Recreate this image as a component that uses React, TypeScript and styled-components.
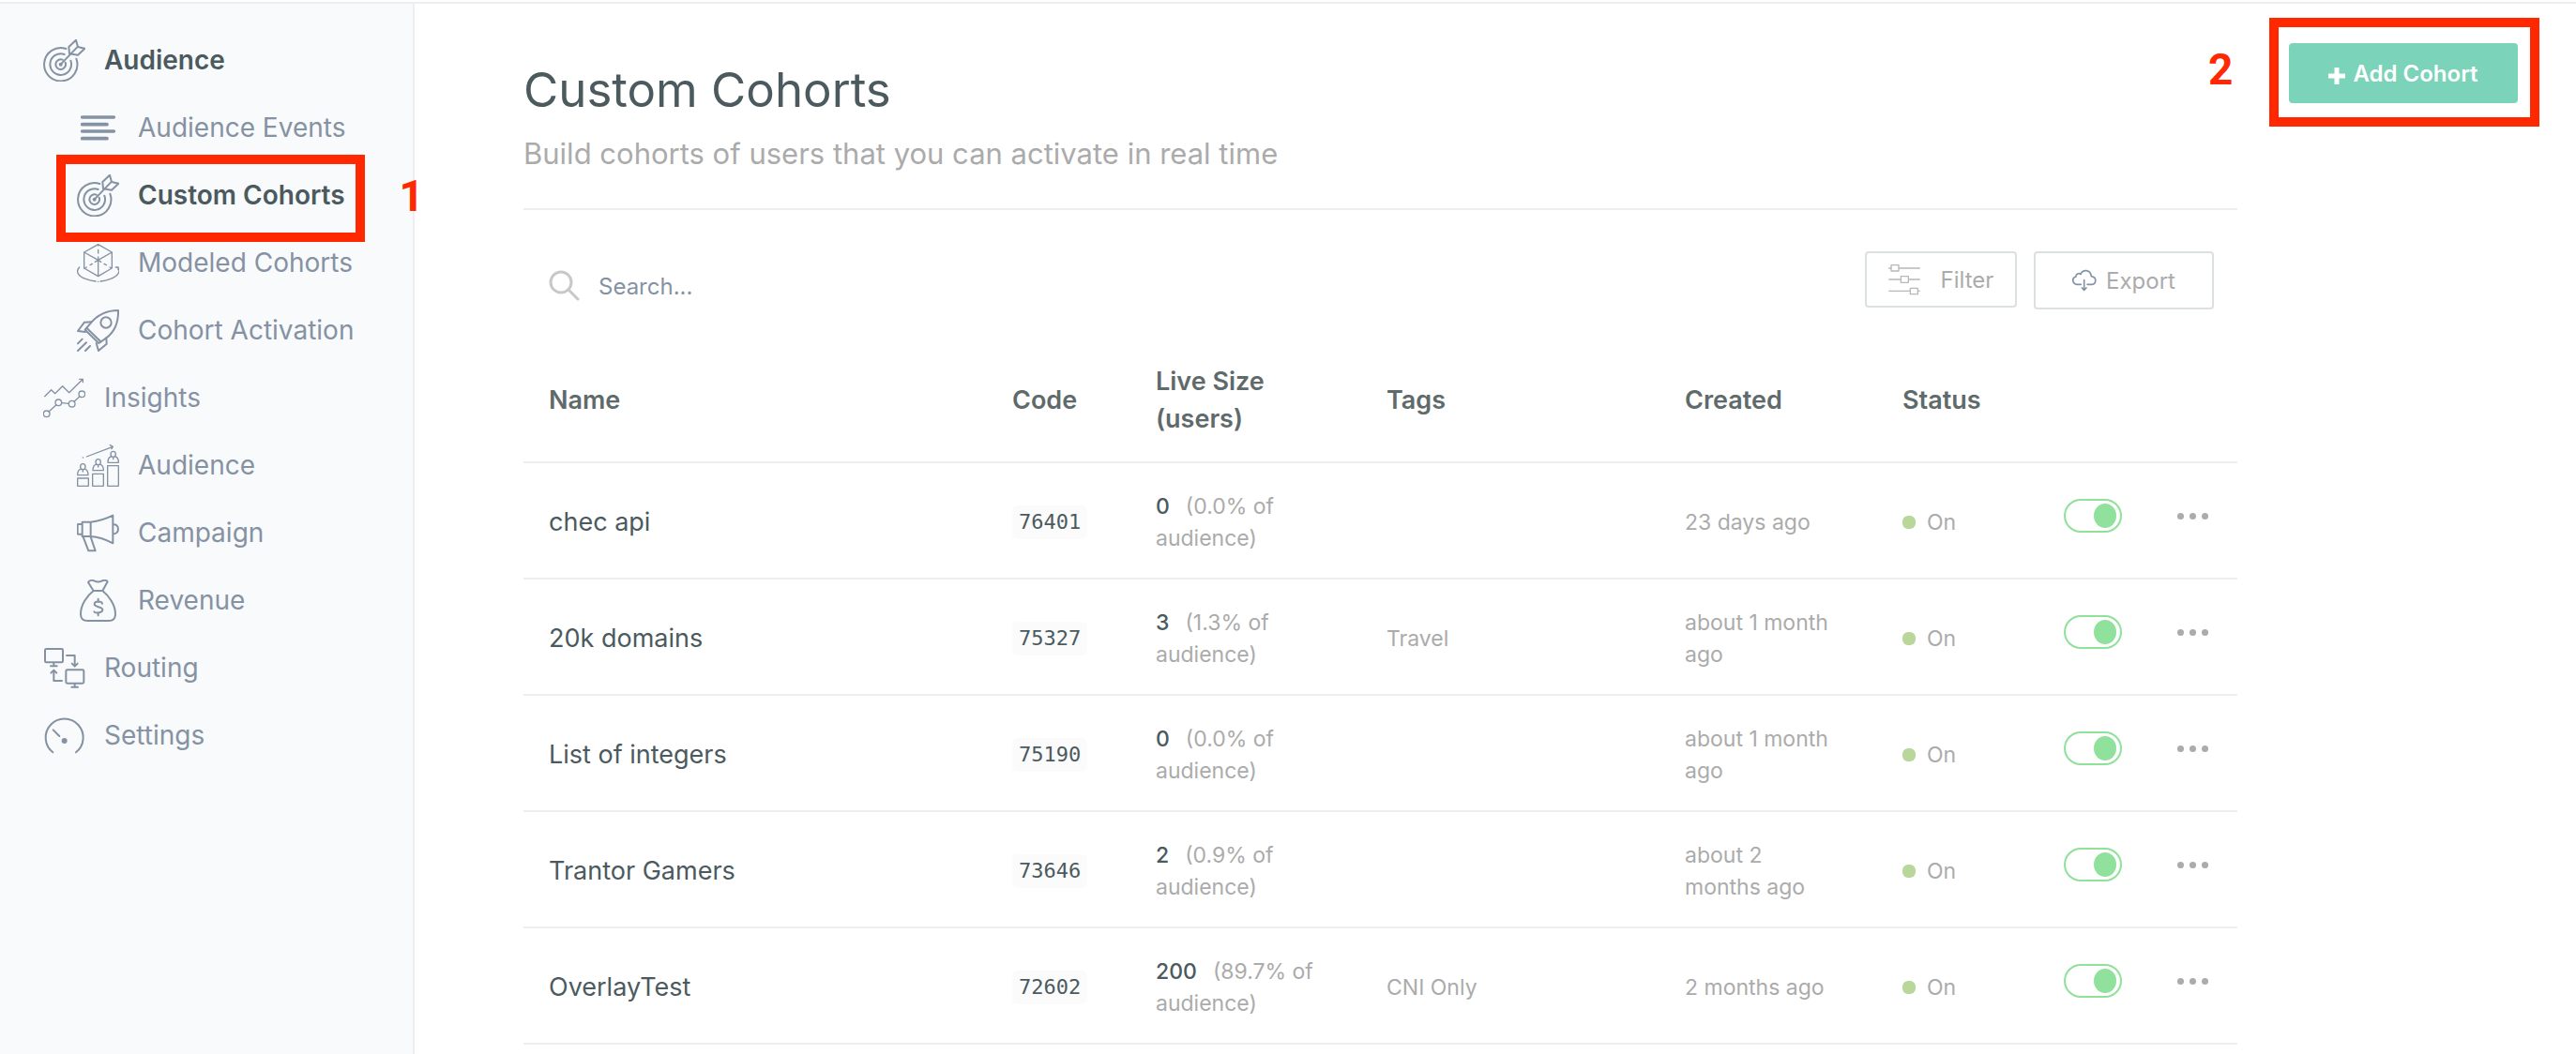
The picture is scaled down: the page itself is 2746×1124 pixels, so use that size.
import React, { useState } from "react";
import styled, { createGlobalStyle } from "styled-components";

const color = {
  ink: "#4b5a5e",
  heading: "#5f6a6b",
  nav: "#8592a3",
  muted: "#ababab",
  line: "#eeeeee",
  panel: "#f9fafc",
  red: "#ff2800",
  mint: "#7bd3b9",
  green: "#8fe19b",
  olive: "#b9d69b",
};

const GlobalStyle = createGlobalStyle`
  *, *::before, *::after { box-sizing: border-box; }
  body {
    margin: 0;
    background: #fff;
    color: ${color.ink};
    font-family: Inter, "Liberation Sans", sans-serif;
    font-size: 23px;
  }
  button, input { font: inherit; }
`;

const Page = styled.div`
  display: flex;
  flex-direction: column;
  min-height: 100vh;
  padding-top: 2px;
`;

const Shell = styled.div`
  display: flex;
  flex: 1;
  border-top: 2px solid ${color.line};
`;

const Sidebar = styled.nav`
  flex: 0 0 442px;
  padding: 24px 0;
  background: ${color.panel};
  border-right: 2px solid ${color.line};
`;

const NavList = styled.ul`
  margin: 0;
  padding: 0;
  list-style: none;
`;

const NavItem = styled.li<{ $nested?: boolean }>`
  position: relative;
  padding-left: ${(p) => (p.$nested ? 82 : 46)}px;
`;

const NavLink = styled.a<{ $active?: boolean }>`
  display: flex;
  align-items: center;
  gap: 20px;
  padding: 14px 0 13px;
  line-height: 45px;
  font-size: 28px;
  font-weight: ${(p) => (p.$active ? 600 : 400)};
  color: ${(p) => (p.$active ? color.ink : color.nav)};
  text-decoration: none;
  white-space: nowrap;
`;

const NavSvg = styled.svg`
  flex: none;
  width: 45px;
  height: 45px;
  fill: none;
  stroke: ${color.nav};
  stroke-width: 6;
  stroke-linecap: round;
  stroke-linejoin: round;
`;

const NavCallout = styled.span`
  position: absolute;
  left: 60px;
  right: 51px;
  top: -7px;
  height: 93px;
  border: 10px solid ${color.red};
  pointer-events: none;
`;

const Step = styled.span`
  position: absolute;
  color: ${color.red};
  font-family: Roboto, "Liberation Sans", sans-serif;
  font-size: 46px;
  line-height: 48px;
  font-weight: 700;
`;

const NavStep = styled(Step)`
  top: 13px;
  right: -12px;
`;

const Main = styled.main`
  display: flex;
  flex: 1;
  align-items: flex-start;
  min-width: 0;
  padding: 42px 62px 0 116px;
  gap: 55px;
`;

const Content = styled.section`
  flex: 1;
  min-width: 0;
`;

const Header = styled.header`
  padding: 18px 0 38px;
  border-bottom: 2px solid ${color.line};
`;

const Title = styled.h1`
  margin: 0 0 16px;
  font-size: 51px;
  line-height: 64px;
  font-weight: 400;
`;

const Subtitle = styled.p`
  margin: 0;
  font-size: 31px;
  line-height: 40px;
  color: ${color.muted};
`;

const Toolbar = styled.div`
  display: flex;
  align-items: flex-start;
  gap: 18px;
  padding: 44px 25px 0 27px;
`;

const SearchBox = styled.label`
  display: flex;
  flex: 1;
  align-items: center;
  gap: 20px;
  height: 72px;
`;

const SearchInput = styled.input`
  flex: 1;
  min-width: 0;
  height: 40px;
  padding: 2px 0 0;
  border: 0;
  outline: 0;
  background: none;
  font-size: 24px;
  color: ${color.ink};
  &::placeholder { color: ${color.nav}; opacity: 1; }
`;

const OutlineButton = styled.button<{ $width: number; $height: number; $gap: number }>`
  display: flex;
  align-items: center;
  justify-content: center;
  gap: ${(p) => p.$gap}px;
  width: ${(p) => p.$width}px;
  height: ${(p) => p.$height}px;
  padding: 0;
  border: 2px solid #dbe1df;
  border-radius: 4px;
  background: #fff;
  color: ${color.muted};
  font-size: 24px;
  cursor: pointer;
`;

const LineSvg = styled.svg<{ $size: number }>`
  flex: none;
  width: ${(p) => p.$size}px;
  height: ${(p) => p.$size}px;
  fill: none;
  stroke-linecap: round;
  stroke-linejoin: round;
`;

const PlusSvg = styled.svg`
  flex: none;
  width: 18px;
  height: 18px;
  margin-top: 6px;
  stroke: #fff;
  stroke-width: 5;
`;

const Table = styled.table`
  width: 100%;
  table-layout: fixed;
  border-collapse: separate;
  border-spacing: 0;
`;

const Col = styled.col<{ $width?: number }>`
  width: ${(p) => (p.$width ? `${p.$width}px` : "auto")};
`;

const Th = styled.th`
  height: 154px;
  padding: 22px 27px 0;
  border-bottom: 2px solid ${color.line};
  font-size: 27px;
  line-height: 40px;
  font-weight: 600;
  text-align: left;
  color: ${color.heading};
`;

const Td = styled.td`
  height: 124px;
  padding: 4px 44px 0 27px;
  border-bottom: 2px solid ${color.line};
  line-height: 34px;
  color: ${color.muted};
`;

const NameCell = styled(Td)`
  font-size: 27px;
  color: ${color.ink};
`;

const ControlCell = styled(Td)`
  padding: 0 0 10px 27px;
`;

const Code = styled.code`
  display: inline-block;
  padding: 0 7px;
  border-radius: 6px;
  background: #fbfbfb;
  font-family: "DejaVu Sans Mono", monospace;
  font-size: 22px;
  line-height: 36px;
  color: ${color.ink};
`;

const Count = styled.span`
  margin-right: 17px;
  font-weight: 500;
  color: ${color.ink};
`;

const Share = styled.span`
  white-space: nowrap;
`;

const Status = styled.span`
  display: flex;
  align-items: center;
  gap: 12px;
`;

const StatusDot = styled.span`
  width: 14px;
  height: 14px;
  border-radius: 6px;
  background: ${color.olive};
`;

const Toggle = styled.input`
  appearance: none;
  display: flex;
  align-items: center;
  width: 62px;
  height: 36px;
  margin: 0;
  padding: 0 4px;
  border: 2px solid #d5d9dc;
  border-radius: 18px;
  cursor: pointer;
  &::before {
    content: "";
    width: 24px;
    height: 26px;
    border-radius: 50%;
    background: #d5d9dc;
  }
  &:checked { justify-content: flex-end; border-color: ${color.green}; }
  &:checked::before { background: ${color.green}; }
`;

const MoreButton = styled.button`
  display: flex;
  gap: 6px;
  padding: 8px 0;
  border: 0;
  background: none;
  cursor: pointer;
`;

const Dot = styled.span`
  width: 7px;
  height: 7px;
  border-radius: 50%;
  background: ${color.muted};
`;

const Action = styled.div`
  position: relative;
  flex: none;
`;

const AddButton = styled.button`
  display: flex;
  align-items: center;
  justify-content: center;
  gap: 8px;
  width: 244px;
  height: 64px;
  padding: 0;
  border: 0;
  border-radius: 4px;
  background: ${color.mint};
  color: #fff;
  font-size: 24px;
  font-weight: 600;
  cursor: pointer;
`;

const ActionCallout = styled.span`
  position: absolute;
  inset: -27px -23px -25px -21px;
  border: 10px solid ${color.red};
  pointer-events: none;
`;

const ActionStep = styled(Step)`
  top: 4px;
  left: -86px;
`;

const TargetIcon = () => (
  <NavSvg viewBox="138 126 135 135" aria-hidden="true">
    <path d="M211 156A53 53 0 1 0 244 188M206 174A34 34 0 1 0 226 194M200 191A16 16 0 1 0 209 200M194 206L246 152" />
    <path d="M222 172L220 150L243 128L249 150L271 155L249 176Z" />
    <circle cx="194" cy="206" r="3" />
  </NavSvg>
);

const ThickPath = styled.path`
  stroke-width: 11;
`;

const ThinGroup = styled.g`
  stroke-width: 4;
`;

const EventsIcon = () => (
  <NavSvg viewBox="246 342 135 135" aria-hidden="true">
    <ThickPath d="M263 375H364M263 398H342M263 420H364M263 443H342" />
  </NavSvg>
);

const CubeIcon = () => (
  <NavSvg viewBox="246 774 135 135" aria-hidden="true">
    <ThinGroup>
      <path d="M314 782L358 807V858L314 884L269 858V807ZM269 807L314 832L358 807M314 832V884" />
      <path d="M314 784V786M314 799V810M314 822V832L323 838M333 844L340 848M351 855L355 857M314 832L304 838M295 844L288 848M277 855L273 857" />
      <path d="M254 855C240 869 251 885 276 893C287 897 297 899 306 900M378 855C386 869 378 883 352 893C342 897 332 899 321 900M313 901H314M370 855H378V863" />
    </ThinGroup>
  </NavSvg>
);

const RocketIcon = () => (
  <NavSvg viewBox="246 990 135 135" aria-hidden="true">
    <path d="M378 993C334 993 308 1011 288 1036L272 1055L316 1098L340 1081C367 1061 379 1031 378 993Z" />
    <path d="M277 1049L322 1093M293 1030L270 1031L249 1059L273 1062M340 1081L341 1100L315 1122L308 1098" />
    <circle cx="339" cy="1032" r="17" />
    <path d="M263 1085L249 1099M276 1096L249 1122M288 1107L273 1122" />
  </NavSvg>
);

const InsightsIcon = () => (
  <NavSvg viewBox="138 6 135 135" aria-hidden="true">
    <ThinGroup>
      <path d="M143 68L164 47L176 59L200 35L221 56L265 13M254 13H265V23" />
      <circle cx="149" cy="124" r="10" />
      <circle cx="187" cy="88" r="10" />
      <circle cx="230" cy="92" r="10" />
      <circle cx="262" cy="61" r="10" />
      <path d="M156 117L180 95M197 89L220 91M237 85L255 68" />
    </ThinGroup>
  </NavSvg>
);

const Person = ({ x, y }: { x: number; y: number }) => (
  <path
    d={`M${x} ${y}c-5 0 -8 4 -8 9c0 5 3 9 8 9s8 -4 8 -9c0 -5 -3 -9 -8 -9ZM${x - 7} ${y + 17}c-8 2 -10 9 -10 19h34c0 -10 -2 -17 -10 -19M${x} ${y + 19}v6`}
  />
);

const AudienceIcon = () => (
  <NavSvg viewBox="246 222 135 135" aria-hidden="true">
    <ThinGroup>
      <path d="M265 264H266M277 261L361 229M352 224L361 229L357 236" />
      <path d="M248 330H283V355H248ZM296 316H331V355H296ZM344 290H379V355H344Z" />
      <Person x={265} y={284} />
      <Person x={314} y={269} />
      <Person x={362} y={244} />
    </ThinGroup>
  </NavSvg>
);

const CampaignIcon = () => (
  <NavSvg viewBox="246 438 135 135" aria-hidden="true">
    <path d="M263 470H290V516H263ZM263 477H250Q248 477 248 480V506Q248 509 251 509H263M290 470C320 467 341 459 361 449V538C341 527 320 518 290 516M361 478C383 474 384 510 361 508M266 518L283 562H305L290 518" />
  </NavSvg>
);

const RevenueIcon = () => (
  <NavSvg viewBox="246 654 135 135" aria-hidden="true">
    <path d="M299 690L282 663C287 655 297 656 303 659C310 662 318 662 325 659C332 655 341 655 344 661L328 690ZM299 690C278 706 258 735 258 764C258 780 267 786 280 786H348C361 786 369 778 369 764C369 735 348 706 328 690" />
    <path d="M327 731C325 722 302 722 302 733C302 744 328 739 328 751C328 763 303 761 301 757M314 716V725M314 761V769" />
  </NavSvg>
);

const RoutingIcon = () => (
  <NavSvg viewBox="138 870 135 135" aria-hidden="true">
    <rect x="144" y="876" width="57" height="43" rx="4" />
    <rect x="211" y="943" width="57" height="43" rx="4" />
    <path d="M172 920V931M162 931H182M239 987V998M229 998H249M213 897H239V931M230 923L239 932L248 923M198 978H172V945M163 953L172 944L181 953" />
  </NavSvg>
);

const SettingsIcon = () => (
  <NavSvg viewBox="138 1086 135 135" aria-hidden="true">
    <path d="M169 1207A60 60 0 1 1 243 1207M170 1135L190 1155" />
    <circle cx="206" cy="1170" r="6" fill={color.nav} />
  </NavSvg>
);

type Entry = {
  label: string;
  icon: () => React.JSX.Element;
  nested?: boolean;
  active?: boolean;
  step?: number;
};

const entries: Entry[] = [
  { label: "Audience", icon: TargetIcon, active: true },
  { label: "Audience Events", icon: EventsIcon, nested: true },
  { label: "Custom Cohorts", icon: TargetIcon, nested: true, active: true, step: 1 },
  { label: "Modeled Cohorts", icon: CubeIcon, nested: true },
  { label: "Cohort Activation", icon: RocketIcon, nested: true },
  { label: "Insights", icon: InsightsIcon },
  { label: "Audience", icon: AudienceIcon, nested: true },
  { label: "Campaign", icon: CampaignIcon, nested: true },
  { label: "Revenue", icon: RevenueIcon, nested: true },
  { label: "Routing", icon: RoutingIcon },
  { label: "Settings", icon: SettingsIcon },
];

type Cohort = {
  name: string;
  code: string;
  size: number;
  share: string;
  tags: string;
  created: string;
};

const cohorts: Cohort[] = [
  { name: "chec api", code: "76401", size: 0, share: "0.0%", tags: "", created: "23 days ago" },
  { name: "20k domains", code: "75327", size: 3, share: "1.3%", tags: "Travel", created: "about 1 month ago" },
  { name: "List of integers", code: "75190", size: 0, share: "0.0%", tags: "", created: "about 1 month ago" },
  { name: "Trantor Gamers", code: "73646", size: 2, share: "0.9%", tags: "", created: "about 2 months ago" },
  { name: "OverlayTest", code: "72602", size: 200, share: "89.7%", tags: "CNI Only", created: "2 months ago" },
];

const CohortRow = ({ cohort }: { cohort: Cohort }) => {
  const [on, setOn] = useState(true);
  return (
    <tr>
      <NameCell>{cohort.name}</NameCell>
      <Td>
        <Code>{cohort.code}</Code>
      </Td>
      <Td>
        <Count>{cohort.size}</Count>
        <Share>{`(${cohort.share} of`}</Share> <Share>audience)</Share>
      </Td>
      <Td>{cohort.tags}</Td>
      <Td>{cohort.created}</Td>
      <Td>
        <Status>
          <StatusDot />
          {on ? "On" : "Off"}
        </Status>
      </Td>
      <ControlCell>
        <Toggle
          type="checkbox"
          checked={on}
          onChange={() => setOn(!on)}
          aria-label={`${cohort.name} active`}
        />
      </ControlCell>
      <ControlCell>
        <MoreButton type="button" aria-label={`More actions for ${cohort.name}`}>
          <Dot />
          <Dot />
          <Dot />
        </MoreButton>
      </ControlCell>
    </tr>
  );
};

export default function App() {
  return (
    <Page>
      <GlobalStyle />
      <Shell>
        <Sidebar>
          <NavList>
            {entries.map(({ label, icon: Icon, nested, active, step }, i) => (
              <NavItem key={i} $nested={nested}>
                <NavLink href="#" $active={active}>
                  <Icon />
                  {label}
                </NavLink>
                {step && (
                  <>
                    <NavCallout />
                    <NavStep>{step}</NavStep>
                  </>
                )}
              </NavItem>
            ))}
          </NavList>
        </Sidebar>
        <Main>
          <Content>
            <Header>
              <Title>Custom Cohorts</Title>
              <Subtitle>Build cohorts of users that you can activate in real time</Subtitle>
            </Header>
            <Toolbar>
              <SearchBox>
                <LineSvg $size={33} viewBox="0 0 33 33" stroke="#c8c8c8" strokeWidth="3" aria-hidden="true">
                  <circle cx="13" cy="13" r="11" />
                  <path d="M21 21L31 31" />
                </LineSvg>
                <SearchInput type="search" placeholder="Search..." aria-label="Search" />
              </SearchBox>
              <OutlineButton type="button" $width={162} $height={60} $gap={22}>
                <LineSvg $size={34} viewBox="156 123 102 102" stroke="#b8b8b8" strokeWidth="4" aria-hidden="true">
                  <path d="M158 138H164M190 138H256M158 174H195M221 174H256M158 211H225M251 211H256" />
                  <path d="M165 128H189V147H165ZM196 164H220V184H196ZM226 202H250V221H226Z" />
                </LineSvg>
                Filter
              </OutlineButton>
              <OutlineButton type="button" $width={192} $height={62} $gap={10}>
                <LineSvg $size={26} viewBox="743 138 78 78" stroke={color.nav} strokeWidth="5" aria-hidden="true">
                  <path d="M771 190H759C742 188 741 168 755 165C754 156 765 152 770 157C777 141 801 141 804 164C823 167 820 189 806 190H791M781 176V206M774 201L781 208L788 201" />
                </LineSvg>
                Export
              </OutlineButton>
            </Toolbar>
            <Table>
              <colgroup>
                <Col />
                <Col $width={153} />
                <Col $width={246} />
                <Col $width={318} />
                <Col $width={232} />
                <Col $width={172} />
                <Col $width={121} />
                <Col $width={91} />
              </colgroup>
              <thead>
                <tr>
                  <Th>Name</Th>
                  <Th>Code</Th>
                  <Th>Live Size (users)</Th>
                  <Th>Tags</Th>
                  <Th>Created</Th>
                  <Th>Status</Th>
                  <Th />
                  <Th />
                </tr>
              </thead>
              <tbody>
                {cohorts.map((c) => (
                  <CohortRow key={c.code} cohort={c} />
                ))}
              </tbody>
            </Table>
          </Content>
          <Action>
            <AddButton type="button">
              <PlusSvg viewBox="0 0 18 18" aria-hidden="true">
                <path d="M9 0V18M0 9H18" />
              </PlusSvg>
              Add Cohort
            </AddButton>
            <ActionCallout />
            <ActionStep>2</ActionStep>
          </Action>
        </Main>
      </Shell>
    </Page>
  );
}
